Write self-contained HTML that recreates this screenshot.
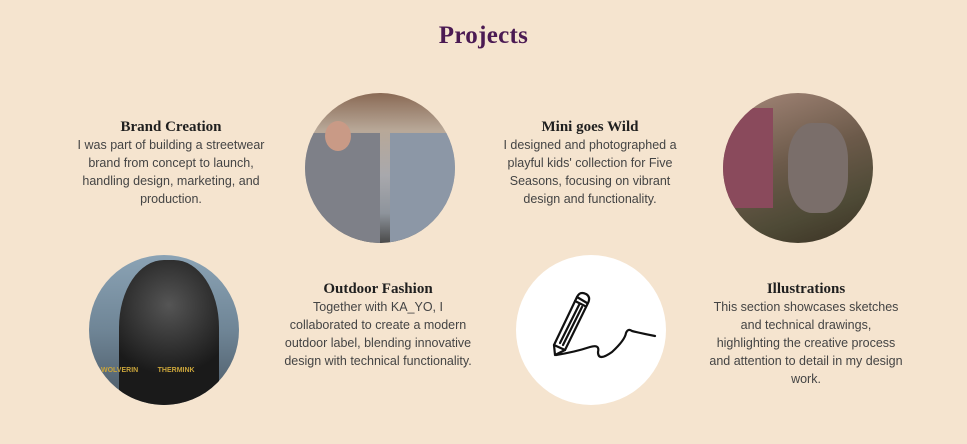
<!DOCTYPE html>
<html><head><meta charset="utf-8"><style>
body{margin:0;width:967px;height:444px;background:#f5e4cf;position:relative;overflow:hidden;font-family:"Liberation Sans",sans-serif}
h1{position:absolute;top:22px;left:0;width:967px;text-align:center;margin:0;font-family:"Liberation Serif",serif;font-weight:900;font-size:25px;color:#4b1a53;letter-spacing:.3px}
.c{position:absolute;width:150px;height:150px;border-radius:50%;overflow:hidden}
.t{position:absolute;width:240px;text-align:center;color:#444;font-size:12.5px;line-height:18px;white-space:nowrap}
.t b{display:block;font-family:"Liberation Serif",serif;font-weight:900;font-size:15px;color:#1f1f1f;line-height:18px}
</style></head><body>
<h1>Projects</h1>
<div class="t" style="left:51px;top:118px"><b>Brand Creation</b>I was part of building a streetwear<br>brand from concept to launch,<br>handling design, marketing, and<br>production.</div>
<div class="c" style="left:305px;top:93px;background:linear-gradient(180deg,#8a6a55 0%,#b8a898 25%,#a8a8ac 55%,#8e949c 80%,#4a4a4a 100%)">
<div style="position:absolute;left:0;top:40px;width:75px;height:110px;background:#7e8088"></div>
<div style="position:absolute;left:85px;top:40px;width:70px;height:110px;background:#8c97a6"></div>
<div style="position:absolute;left:20px;top:28px;width:26px;height:30px;border-radius:50%;background:#c99a86"></div></div>
<div class="t" style="left:470px;top:118px"><b>Mini goes Wild</b>I designed and photographed a<br>playful kids' collection for Five<br>Seasons, focusing on vibrant<br>design and functionality.</div>
<div class="c" style="left:723px;top:93px;background:linear-gradient(160deg,#a6887a,#6c5a4a 45%,#4e4a36 75%,#3a3022)">
<div style="position:absolute;left:0;top:15px;width:50px;height:100px;background:#8a4a5c"></div>
<div style="position:absolute;left:65px;top:30px;width:60px;height:90px;border-radius:40%;background:#7a6e6a"></div></div>
<div class="c" style="left:89px;top:255px;background:linear-gradient(180deg,#8ba3b5,#6f8596 50%,#4a5864)">
<div style="position:absolute;left:30px;top:5px;width:100px;height:150px;border-radius:45% 45% 10% 10%;background:radial-gradient(circle at 50% 30%,#555,#1a1a1a 60%)"></div>
<div style="position:absolute;left:12px;top:112px;font-size:7px;color:#c9a43a;font-weight:bold">WOLVERIN&nbsp;&nbsp;&nbsp;&nbsp;&nbsp;&nbsp;&nbsp;&nbsp;&nbsp;&nbsp;THERMINK</div></div>
<div class="t" style="left:258px;top:280px"><b>Outdoor Fashion</b>Together with KA_YO, I<br>collaborated to create a modern<br>outdoor label, blending innovative<br>design with technical functionality.</div>
<div class="c" style="left:516px;top:255px;background:#fff">
<svg width="150" height="150" viewBox="516 255 150 150" fill="none" stroke="#111" stroke-width="2.2" stroke-linecap="round" stroke-linejoin="round">
<path d="M555 355 L554 345 L577 297 Q580 291 586 294 Q591 297 588 303 L565 350 Z"/>
<path d="M577 297 L587 303 M575 301 L585 306 M560 343 L579 305 M563 345 L582 307 M554 345 L565 350"/>
<path d="M556 355 Q575 352 590 347 Q600 344 598 352 Q598 362 612 352 Q625 340 626 333 Q628 328 632 331 Q640 333 655 336"/>
</svg></div>
<div class="t" style="left:686px;top:280px"><b>Illustrations</b>This section showcases sketches<br>and technical drawings,<br>highlighting the creative process<br>and attention to detail in my design<br>work.</div>
</body></html>
